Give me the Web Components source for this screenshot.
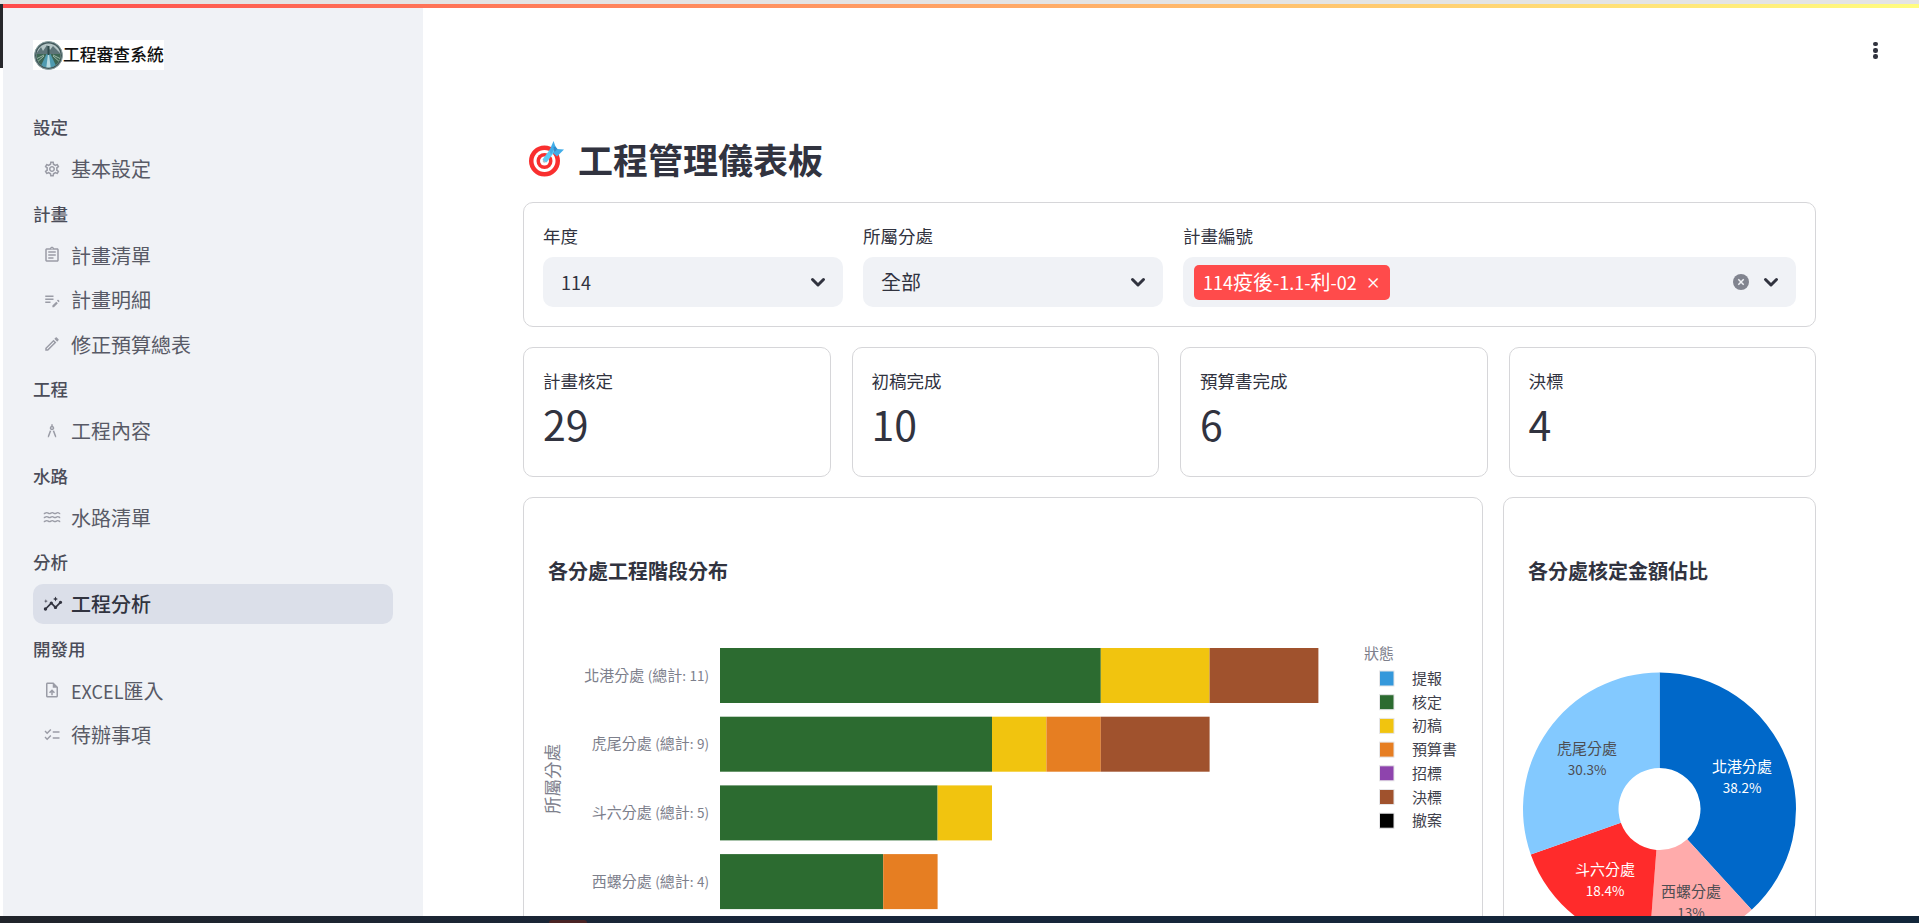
<!DOCTYPE html>
<html lang="zh-Hant">
<head>
<meta charset="utf-8">
<title>工程管理儀表板</title>
<style>
  html, body { margin: 0; height: 100%; overflow: hidden; background: #fff; }
  body { font-family: "Noto Sans CJK TC", "Noto Sans", sans-serif; color: #31333f; }
</style>
</head>
<body>
<app-shell>
  <side-nav slot="side">
    <nav-section label="設定">
      <nav-item icon="settings">基本設定</nav-item>
    </nav-section>
    <nav-section label="計畫">
      <nav-item icon="assignment">計畫清單</nav-item>
      <nav-item icon="editnote">計畫明細</nav-item>
      <nav-item icon="edit">修正預算總表</nav-item>
    </nav-section>
    <nav-section label="工程">
      <nav-item icon="architecture">工程內容</nav-item>
    </nav-section>
    <nav-section label="水路">
      <nav-item icon="water">水路清單</nav-item>
    </nav-section>
    <nav-section label="分析">
      <nav-item icon="insights" active>工程分析</nav-item>
    </nav-section>
    <nav-section label="開發用">
      <nav-item icon="upload"><span style="font-size:.9em">EXCEL</span>匯入</nav-item>
      <nav-item icon="checklist">待辦事項</nav-item>
    </nav-section>
  </side-nav>

  <page-title>工程管理儀表板</page-title>

  <filter-bar>
    <filter-select label="年度" value="114"></filter-select>
    <filter-select label="所屬分處" value="全部"></filter-select>
    <filter-select label="計畫編號" chip="114疫後-1.1-利-02"></filter-select>
  </filter-bar>

  <metric-row>
    <metric-card label="計畫核定" value="29"></metric-card>
    <metric-card label="初稿完成" value="10"></metric-card>
    <metric-card label="預算書完成" value="6"></metric-card>
    <metric-card label="決標" value="4"></metric-card>
  </metric-row>

  <chart-row>
    <chart-card title="各分處工程階段分布"><stage-chart></stage-chart></chart-card>
    <chart-card title="各分處核定金額佔比"><share-pie></share-pie></chart-card>
  </chart-row>
</app-shell>

<script>
// ==================== 圖示 ====================
const ICONS = {
  settings: '<path d="M19.43 12.98c.04-.32.07-.64.07-.98 0-.34-.03-.66-.07-.98l2.11-1.65c.19-.15.24-.42.12-.64l-2-3.46c-.09-.16-.26-.25-.44-.25-.06 0-.12.01-.17.03l-2.49 1c-.52-.4-1.08-.73-1.69-.98l-.38-2.65C14.46 2.18 14.25 2 14 2h-4c-.25 0-.46.18-.49.42l-.38 2.65c-.61.25-1.17.59-1.69.98l-2.49-1c-.06-.02-.12-.03-.18-.03-.17 0-.34.09-.43.25l-2 3.46c-.13.22-.07.49.12.64l2.11 1.65c-.04.32-.07.65-.07.98 0 .33.03.66.07.98l-2.11 1.65c-.19.15-.24.42-.12.64l2 3.46c.09.16.26.25.44.25.06 0 .12-.01.17-.03l2.49-1c.52.4 1.08.73 1.69.98l.38 2.65c.03.24.24.42.49.42h4c.25 0 .46-.18.49-.42l.38-2.65c.61-.25 1.17-.59 1.69-.98l2.49 1c.06.02.12.03.18.03.17 0 .34-.09.43-.25l2-3.46c.12-.22.07-.49-.12-.64l-2.11-1.65zm-1.98-1.71c.04.31.05.52.05.73 0 .21-.02.43-.05.73l-.14 1.13.89.7 1.08.84-.7 1.21-1.27-.51-1.04-.42-.9.68c-.43.32-.84.56-1.25.73l-1.06.43-.16 1.13-.2 1.35h-1.4l-.19-1.35-.16-1.13-1.06-.43c-.43-.18-.83-.41-1.23-.71l-.91-.7-1.06.43-1.27.51-.7-1.21 1.08-.84.89-.7-.14-1.13c-.03-.31-.05-.54-.05-.74s.02-.43.05-.73l.14-1.13-.89-.7-1.08-.84.7-1.21 1.27.51 1.04.42.9-.68c.43-.32.84-.56 1.25-.73l1.06-.43.16-1.13.2-1.35h1.39l.19 1.35.16 1.13 1.06.43c.43.18.83.41 1.23.71l.91.7 1.06-.43 1.27-.51.7 1.21-1.07.85-.89.7.14 1.13zM12 8c-2.21 0-4 1.79-4 4s1.79 4 4 4 4-1.79 4-4-1.79-4-4-4zm0 6c-1.1 0-2-.9-2-2s.9-2 2-2 2 .9 2 2-.9 2-2 2z"/>',
  assignment: '<path d="M7 15h7v2H7zm0-4h10v2H7zm0-4h10v2H7zm12-4h-4.18C14.4 1.84 13.3 1 12 1c-1.3 0-2.4.84-2.82 2H5c-.14 0-.27.01-.4.04-.39.08-.74.28-1.01.55-.18.18-.33.4-.43.64-.1.23-.16.49-.16.77v14c0 .27.06.54.16.78s.25.45.43.64c.27.27.62.47 1.01.55.13.02.26.03.4.03h14c1.1 0 2-.9 2-2V5c0-1.1-.9-2-2-2zm-7-.25c.41 0 .75.34.75.75s-.34.75-.75.75-.75-.34-.75-.75.34-.75.75-.75zM19 19H5V5h14v14z"/>',
  editnote: '<path d="M14 10H3v2h11v-2zm0-4H3v2h11V6zM3 16h7v-2H3v2zm9.5 3.4V21.500h2.100l5.200-5.200-2.100-2.100-5.200 5.200zm9.300-6.300-1.400-1.400a.6.600 0 0 0-.8 0l-1 1 2.200 2.200 1-1a.6.600 0 0 0 0-.8z"/>',
  edit: '<path d="M14.06 9.02l.92.92L5.92 19H5v-.92l9.06-9.06M17.66 3c-.25 0-.51.1-.7.29l-1.83 1.83 3.75 3.75 1.83-1.83c.39-.39.39-1.02 0-1.41l-2.34-2.34c-.2-.2-.45-.29-.71-.29zm-3.6 3.19L3 17.25V21h3.75L17.81 9.94l-3.75-3.75z"/>',
  architecture: '<path d="M6.36 18.78 6.610 21l1.620-1.540 2.770-7.600c-.68-.17-1.280-.51-1.770-.98l-2.870 7.900zM14.770 10.880c-.49.47-1.100.81-1.770.98l2.770 7.600L17.390 21l.26-2.220-2.880-7.900zM15 8c0-1.300-.84-2.400-2-2.820V3h-2v2.180C9.840 5.600 9 6.700 9 8c0 1.660 1.340 3 3 3s3-1.340 3-3zm-3 1c-.55 0-1-.45-1-1s.45-1 1-1 1 .45 1 1-.45 1-1 1z"/>',
  water: '<path fill="none" stroke="currentColor" stroke-width="1.800" d="M1 7.500c2 0 2-1.300 4-1.300s2 1.300 3.700 1.300 2-1.300 3.600-1.300 2 1.300 3.700 1.300 2-1.300 3.700-1.300 2 1.300 3.300 1.300M1 12.800c2 0 2-1.300 4-1.300s2 1.300 3.700 1.300 2-1.300 3.600-1.300 2 1.300 3.700 1.300 2-1.300 3.700-1.300 2 1.300 3.300 1.300M1 18.100c2 0 2-1.300 4-1.300s2 1.300 3.700 1.300 2-1.300 3.600-1.300 2 1.300 3.700 1.300 2-1.300 3.700-1.300 2 1.300 3.300 1.300"/>',
  insights: '<path d="M21 8c-1.450 0-2.260 1.440-1.930 2.510l-3.550 3.560c-.3-.09-.74-.09-1.040 0l-2.550-2.550C12.270 10.450 11.460 9 10 9c-1.450 0-2.270 1.440-1.930 2.520l-4.560 4.550C2.440 15.740 1 16.550 1 18c0 1.100.9 2 2 2 1.450 0 2.260-1.440 1.930-2.510l4.550-4.560c.3.09.74.09 1.040 0l2.550 2.550C12.730 16.550 13.540 18 15 18c1.450 0 2.270-1.440 1.930-2.520l3.560-3.550c1.070.33 2.510-.48 2.510-1.930 0-1.100-.9-2-2-2z"/><path d="M15 9l.94-2.070L18 6l-2.060-.93L15 3l-.92 2.070L12 6l2.080.93zM3.500 11L4 9l2-.5L4 8l-.5-2L3 8l-2 .5L3 9z"/>',
  upload: '<path d="M14 2H6c-1.100 0-1.990.9-1.990 2L4 20c0 1.100.89 2 1.990 2H18c1.100 0 2-.9 2-2V8l-6-6zm4 18H6V4h7v5h5v11zM8 15.010l1.410 1.410L11 14.840V19h2v-4.160l1.590 1.590L16 15.010 12.010 11 8 15.010z"/>',
  checklist: '<path d="M22 7h-9v2h9V7zm0 8h-9v2h9v-2zM5.540 11 2 7.460l1.410-1.410 2.120 2.120 4.240-4.240 1.410 1.410L5.540 11zm0 8L2 15.460l1.410-1.410 2.120 2.120 4.240-4.240 1.410 1.410L5.540 19z"/>'
};

const CHEVRON = '<svg viewBox="0 0 24 24" width="24" height="24" fill="none" stroke="currentColor" stroke-width="3" stroke-linecap="round" stroke-linejoin="round"><path d="M6.500 9.500 12 15l5.500-5.500"/></svg>';

// 拉丁字母與數字在參考圖中較窄，這裡縮小一點
const narrowLatin = (text, tag = 'span') =>
  text.replace(/[\x21-\x7e]+/g, m => `<${tag} style="font-size:.9em">${m}</${tag}>`);

// ==================== 外框 ====================
class AppShell extends HTMLElement {
  constructor() {
    super();
    this.attachShadow({ mode: 'open' }).innerHTML = `
      <style>
        :host { display: flex; flex-direction: column; width: 100%; height: 923px; overflow: hidden; }
        .top-line { flex: none; height: 4px; background: #e4e4e4; }
        .body { flex: 1; min-height: 0; display: flex; }
        .rail { flex: none; width: 3px; background: #fff; }
        .rail div { height: 64px; background: #26272b; }
        .col { flex: 1; min-width: 0; display: flex; flex-direction: column; }
        .decoration { flex: none; height: 4px; background: linear-gradient(90deg, #ff4b4b, #fffd80); }
        .row { flex: 1; min-height: 0; display: flex; }
        .main { position: relative; flex: 1; min-width: 0; overflow: hidden; padding: 126px 103px 0 100px; display: flex; flex-direction: column; }
        .kebab { position: absolute; top: 34px; right: 41.500px; display: flex; flex-direction: column; gap: 1.800px; }
        .kebab i { width: 4.400px; height: 4.400px; border-radius: 50%; background: #31333f; }
        .taskbar { position: relative; flex: none; height: 7px; background: linear-gradient(90deg, #20242a, #18263a 40%, #12263a); }
        .taskbar i { position: absolute; left: 549px; top: 4px; width: 38px; height: 3px; border-radius: 3px 3px 0 0; background: #4a2324; }
      </style>
      <div class="top-line"></div>
      <div class="body">
        <div class="rail"><div></div></div>
        <div class="col">
          <div class="decoration"></div>
          <div class="row">
            <slot name="side"></slot>
            <div class="main">
              <div class="kebab"><i></i><i></i><i></i></div>
              <slot></slot>
            </div>
          </div>
        </div>
      </div>
      <div class="taskbar"><i></i></div>`;
  }
}
customElements.define('app-shell', AppShell);

// ==================== 側邊欄 ====================
class SideNav extends HTMLElement {
  constructor() {
    super();
    this.attachShadow({ mode: 'open' }).innerHTML = `
      <style>
        :host { display: block; flex: none; width: 420px; box-sizing: border-box; padding: 32px 30px 0; background: #f0f2f6; }
        .logo { display: inline-flex; align-items: center; box-sizing: border-box; height: 30px; width: 131px; padding-bottom: 2px; background: #fff; color: #111; font-size: 16.800px; font-weight: 500; line-height: 28px; white-space: nowrap; overflow: hidden; margin-bottom: 45px; }
        .logo svg { flex: none; margin: 2px 0 0 1px; }
        nav { display: flex; flex-direction: column; gap: 13px; }
      </style>
      <div class="logo">
        <svg width="29" height="29" viewBox="0 0 29 29">
          <defs><clipPath id="disc"><circle cx="14.500" cy="14.500" r="12"/></clipPath></defs>
          <circle cx="14.500" cy="14.500" r="14" fill="#43595c"/>
          <circle cx="14.500" cy="14.500" r="14" fill="none" stroke="#8ba3a3" stroke-width="1"/>
          <g clip-path="url(#disc)">
            <rect width="29" height="29" fill="#b5c6c6"/>
            <path d="M2 13 7 6l2 4 4-6 3 5 3-4 3 3 5 5z" fill="#5d7478"/>
            <rect y="13" width="29" height="16" fill="#3d6654"/>
            <path d="M12.500 13h4L24 29H5z" fill="#4f9bb0"/>
            <path d="M14 13h1l2 16h-5z" fill="#b8dbe0"/>
            <path d="M2 18 10 14M27 18 19 14M1 23l9-8M28 23l-9-8" stroke="#9bb8a8" stroke-width="1"/>
            <rect x="13.500" y="5" width="2" height="9" fill="#2f4a4a"/>
          </g>
        </svg>工程審查系統
      </div>
      <nav><slot></slot></nav>`;
  }
}
customElements.define('side-nav', SideNav);

class NavSection extends HTMLElement {
  constructor() {
    super();
    this.attachShadow({ mode: 'open' }).innerHTML = `
      <style>
        :host { display: flex; flex-direction: column; gap: 4.500px; }
        .label { height: 24px; line-height: 24px; font-size: 17.500px; font-weight: 500; color: #4b4d59; margin-bottom: 5px; }
      </style>
      <div class="label"></div>
      <slot></slot>`;
  }
  connectedCallback() {
    this.shadowRoot.querySelector('.label').textContent = this.getAttribute('label');
  }
}
customElements.define('nav-section', NavSection);

class NavItem extends HTMLElement {
  constructor() {
    super();
    this.attachShadow({ mode: 'open' }).innerHTML = `
      <style>
        :host { display: flex; align-items: center; gap: 10px; height: 40px; padding-left: 10px; border-radius: 10px; font-size: 20px; color: #585a66; }
        :host([active]) { background: #dbdfe9; color: #31333f; font-weight: 500; }
        svg { flex: none; width: 18px; height: 18px; fill: currentColor; color: #9a9ca6; }
        :host([active]) svg { color: #31333f; width: 20px; height: 20px; margin-right: -2px; }
      </style>
      <svg viewBox="0 0 24 24"></svg>
      <span><slot></slot></span>`;
  }
  connectedCallback() {
    this.shadowRoot.querySelector('svg').innerHTML = ICONS[this.getAttribute('icon')] || '';
  }
}
customElements.define('nav-item', NavItem);

// ==================== 標題 ====================
class PageTitle extends HTMLElement {
  constructor() {
    super();
    this.attachShadow({ mode: 'open' }).innerHTML = `
      <style>
        :host { display: flex; align-items: center; flex: none; gap: 13px; height: 50px; margin-bottom: 18px; padding-left: 6px; font-size: 35px; font-weight: 700; color: #31333f; line-height: 50px; white-space: nowrap; }
        svg { flex: none; }
      </style>
      <svg width="36" height="36" viewBox="0 0 36 36">
        <circle cx="15.500" cy="20" r="15.500" fill="#f92f2f"/>
        <circle cx="15.500" cy="20" r="11" fill="#fff"/>
        <circle cx="15.500" cy="20" r="8" fill="#f92f2f"/>
        <circle cx="15.500" cy="20" r="4.500" fill="#fff"/>
        <circle cx="15.500" cy="20" r="1.800" fill="#b9bfc6"/>
        <path d="M15.500 20 24 8.500" stroke="#5ecbf5" stroke-width="5"/>
        <path d="M20.500 9.500 24.500 0l2 5.500L22 14z" fill="#42ade8"/>
        <path d="M24 12 28 8l7 .5-7 7z" fill="#42ade8"/>
        <path d="M24.500 6 26.500 5.500 28.500 8 25.500 11z" fill="#2b8ccf"/>
      </svg>
      <span><slot></slot></span>`;
  }
}
customElements.define('page-title', PageTitle);

// ==================== 篩選 ====================
class FilterBar extends HTMLElement {
  constructor() {
    super();
    this.attachShadow({ mode: 'open' }).innerHTML = `
      <style>
        :host { display: grid; grid-template-columns: 300px 300px 1fr; gap: 20px; flex: none; box-sizing: border-box; height: 125px; padding: 19px 19px 0 19px; border: 1px solid #d6d6d9; border-radius: 10px; margin-bottom: 20px; }
      </style>
      <slot></slot>`;
  }
}
customElements.define('filter-bar', FilterBar);

class FilterSelect extends HTMLElement {
  constructor() {
    super();
    this.attachShadow({ mode: 'open' }).innerHTML = `
      <style>
        :host { display: block; min-width: 0; }
        .label { height: 28px; line-height: 28px; margin-bottom: 7px; font-size: 17.500px; color: #31333f; }
        .box { display: flex; align-items: center; height: 50px; box-sizing: border-box; padding: 0 13px 0 18px; background: #f0f2f6; border-radius: 10px; font-size: 20px; line-height: 26px; color: #31333f; }
        .box.has-chip { padding-left: 11px; }
        .value { flex: 1; }
        .chip { display: inline-flex; align-items: center; width: 196px; height: 35px; padding: 0 0 0 9px; box-sizing: border-box; border-radius: 5px; background: #ff4b4b; color: #fff; white-space: nowrap; }
        .chip b { font-weight: 500; margin-left: 9px; font-size: 15px; }
        .clear { flex: none; width: 16px; height: 16px; margin-right: 10px; }
        .chev { flex: none; display: flex; color: #31333f; }
      </style>
      <div class="label"></div>
      <div class="box"><div class="value"></div><span class="chev">${CHEVRON}</span></div>`;
  }
  connectedCallback() {
    const root = this.shadowRoot;
    root.querySelector('.label').textContent = this.getAttribute('label');
    const value = root.querySelector('.value');
    const chip = this.getAttribute('chip');
    if (chip) {
      root.querySelector('.box').classList.add('has-chip');
      value.innerHTML = `<span class="chip"><span>${narrowLatin(chip)}</span><b>×</b></span>`;
      root.querySelector('.chev').insertAdjacentHTML('beforebegin',
        '<svg class="clear" viewBox="0 0 16 16"><circle cx="8" cy="8" r="8" fill="#81848f"/><path d="M5.300 5.300l5.400 5.400M10.700 5.300l-5.400 5.400" stroke="#f0f2f6" stroke-width="1.500"/></svg>');
    } else {
      value.innerHTML = narrowLatin(this.getAttribute('value'));
    }
  }
}
customElements.define('filter-select', FilterSelect);

// ==================== 指標 ====================
class MetricRow extends HTMLElement {
  constructor() {
    super();
    this.attachShadow({ mode: 'open' }).innerHTML = `
      <style>
        :host { display: grid; grid-template-columns: repeat(4, 1fr); gap: 21px; flex: none; margin-bottom: 20px; }
      </style>
      <slot></slot>`;
  }
}
customElements.define('metric-row', MetricRow);

class MetricCard extends HTMLElement {
  constructor() {
    super();
    this.attachShadow({ mode: 'open' }).innerHTML = `
      <style>
        :host { display: block; box-sizing: border-box; height: 130px; padding: 18px 19px 0 19px; border: 1px solid #d6d6d9; border-radius: 10px; color: #31333f; }
        .label { height: 30px; line-height: 30px; font-size: 17.500px; }
        .value { height: 50px; line-height: 50px; margin-top: 2px; font-size: 41px; }
      </style>
      <div class="label"></div>
      <div class="value"></div>`;
  }
  connectedCallback() {
    this.shadowRoot.querySelector('.label').textContent = this.getAttribute('label');
    this.shadowRoot.querySelector('.value').textContent = this.getAttribute('value');
  }
}
customElements.define('metric-card', MetricCard);

// ==================== 圖表 ====================
class ChartRow extends HTMLElement {
  constructor() {
    super();
    this.attachShadow({ mode: 'open' }).innerHTML = `
      <style>
        :host { display: grid; grid-template-columns: 960px 313px; gap: 20px; flex: none; }
      </style>
      <slot></slot>`;
  }
}
customElements.define('chart-row', ChartRow);

class ChartCard extends HTMLElement {
  constructor() {
    super();
    this.attachShadow({ mode: 'open' }).innerHTML = `
      <style>
        :host { display: block; box-sizing: border-box; height: 480px; border: 1px solid #d6d6d9; border-radius: 10px; overflow: hidden; }
        .title { height: 30px; line-height: 30px; padding: 58px 0 13px 24px; font-size: 20px; font-weight: 700; color: #31333f; white-space: nowrap; }
      </style>
      <div class="title"></div>
      <slot></slot>`;
  }
  connectedCallback() {
    this.shadowRoot.querySelector('.title').textContent = this.getAttribute('title');
    this.removeAttribute('title');
  }
}
customElements.define('chart-card', ChartCard);

// 水平堆疊長條，座標相對於 SVG 左上角
class StageChart extends HTMLElement {
  constructor() {
    super();
    const COLORS = { 提報: '#3498db', 核定: '#2c6b30', 初稿: '#f1c40f', 預算書: '#e67e22', 招標: '#8e44ad', 決標: '#a0522d', 撤案: '#000000' };
    const ROWS = [
      { name: '北港分處 (總計: 11)', parts: [['核定', 7], ['初稿', 2], ['決標', 2]] },
      { name: '虎尾分處 (總計: 9)', parts: [['核定', 5], ['初稿', 1], ['預算書', 1], ['決標', 2]] },
      { name: '斗六分處 (總計: 5)', parts: [['核定', 4], ['初稿', 1]] },
      { name: '西螺分處 (總計: 4)', parts: [['核定', 3], ['預算書', 1]] }
    ];
    const X0 = 196, Y0 = 49, UNIT = 54.400, BAR_H = 55, PITCH = 68.700;
    let bars = '';
    ROWS.forEach((row, i) => {
      const y = Y0 + i * PITCH;
      let x = X0;
      row.parts.forEach(([stage, n]) => {
        bars += `<rect x="${x}" y="${y}" width="${n * UNIT}" height="${BAR_H}" fill="${COLORS[stage]}"/>`;
        x += n * UNIT;
      });
      bars += `<text class="tick" x="185" y="${y + BAR_H / 2 + 5}" text-anchor="end">${narrowLatin(row.name, 'tspan')}</text>`;
    });
    let legend = '<text class="tick" x="840" y="60" font-size="15">狀態</text>';
    Object.keys(COLORS).forEach((stage, i) => {
      const y = 72 + i * 23.700;
      legend += `<rect x="855.500" y="${y}" width="14.500" height="15" fill="${COLORS[stage]}" stroke="#e6e6e8" stroke-width="1"/>`;
      legend += `<text class="leg" x="888" y="${y + 13}">${stage}</text>`;
    });
    this.attachShadow({ mode: 'open' }).innerHTML = `
      <style>
        :host { display: block; }
        svg { display: block; }
        text { font-family: "Noto Sans CJK TC", sans-serif; }
        .tick { font-size: 15px; fill: #7d808c; }
        .leg { font-size: 15px; fill: #3f414c; }
        .axis { font-size: 17.500px; fill: #7d808c; }
      </style>
      <svg width="958" height="330" viewBox="0 0 958 330">
        ${bars}
        <text class="axis" transform="translate(35 180) rotate(-90)" text-anchor="middle">所屬分處</text>
        ${legend}
      </svg>`;
  }
}
customElements.define('stage-chart', StageChart);

// 環形圖
class SharePie extends HTMLElement {
  constructor() {
    super();
    const CX = 155.500, CY = 210, R = 136.500, r = 41;
    const SLICES = [
      { share: 38.2, color: '#0068c9' },
      { share: 13.0, color: '#ffabab' },
      { share: 18.4, color: '#ff2b2b' },
      { share: 30.4, color: '#83c9ff' }
    ];
    const LABELS = [
      { name: '北港分處', pct: '38.2%', x: 238, y: 173, fill: '#fff' },
      { name: '西螺分處', pct: '13%', x: 187, y: 298, fill: '#4d4d52' },
      { name: '斗六分處', pct: '18.4%', x: 101, y: 276, fill: '#fff' },
      { name: '虎尾分處', pct: '30.3%', x: 83, y: 155, fill: '#4d4d52' }
    ];
    const at = (rad, a) => `${(CX + rad * Math.sin(a)).toFixed(2)} ${(CY - rad * Math.cos(a)).toFixed(2)}`;
    let a = 0, paths = '';
    SLICES.forEach(s => {
      const b = a + s.share / 100 * Math.PI * 2;
      const large = b - a > Math.PI ? 1 : 0;
      paths += `<path fill="${s.color}" d="M${at(R, a)}A${R} ${R} 0 ${large} 1 ${at(R, b)}L${at(r, b)}A${r} ${r} 0 ${large} 0 ${at(r, a)}Z"/>`;
      a = b;
    });
    const texts = LABELS.map(l => `<text x="${l.x}" y="${l.y}" fill="${l.fill}" text-anchor="middle">${l.name}<tspan x="${l.x}" dy="21" style="font-size:.9em">${l.pct}</tspan></text>`).join('');
    this.attachShadow({ mode: 'open' }).innerHTML = `
      <style>
        :host { display: block; }
        svg { display: block; }
        text { font-family: "Noto Sans CJK TC", sans-serif; font-size: 15px; }
      </style>
      <svg width="311" height="330" viewBox="0 0 311 330">${paths}${texts}</svg>`;
  }
}
customElements.define('share-pie', SharePie);
</script>
</body>
</html>
